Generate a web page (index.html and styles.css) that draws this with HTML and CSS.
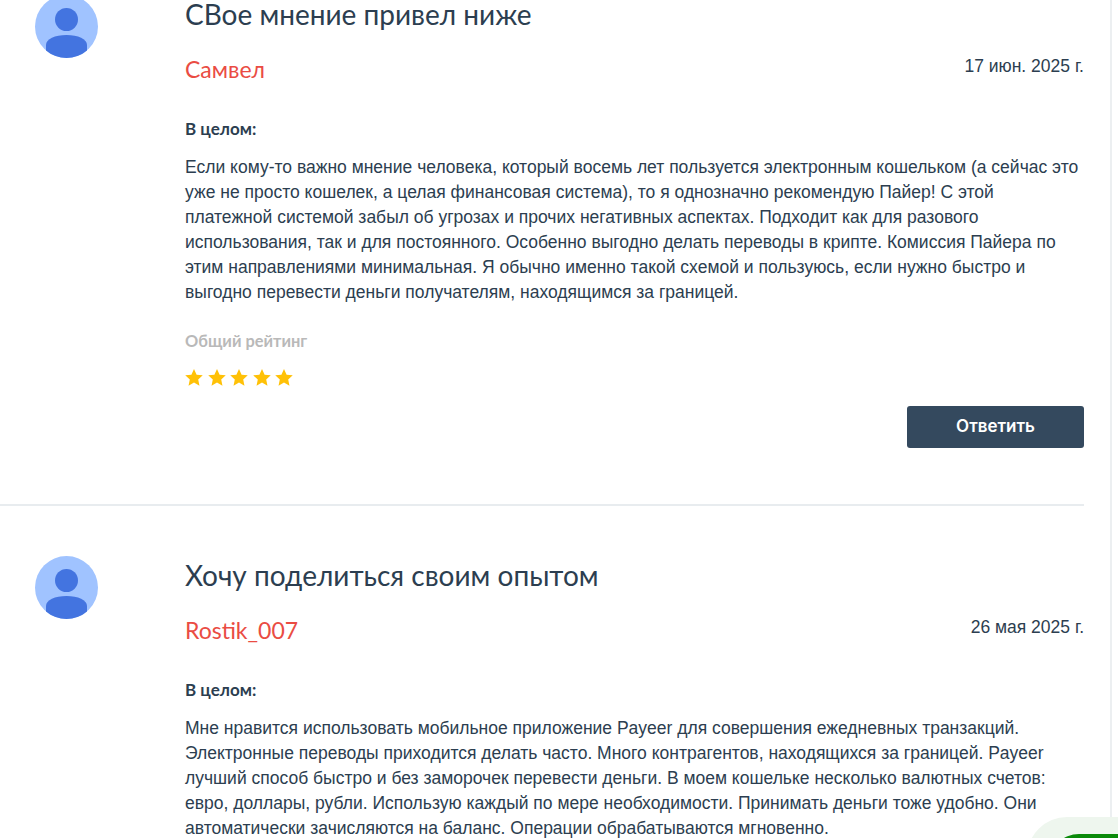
FILE: index.html
```html
<!DOCTYPE html>
<html lang="ru">
<head>
  <meta charset="UTF-8">
  <meta name="viewport" content="width=device-width, initial-scale=1.0">
  <title>Отзывы</title>
  <link rel="stylesheet" href="styles.css">
</head>
<body>
  <div class="page">
    <div class="review">
      <div class="avatar">
        <svg viewBox="0 0 63 63" width="63" height="63"><circle cx="31.500" cy="31.500" r="31.500" fill="#a0c3ff"/><circle cx="31.500" cy="24.500" r="11.500" fill="#4374e0"/><path d="M11 55.400V50c0-6 9-10 20.500-10S52 44 52 50v5.400A31.500 31.500 0 0 1 11 55.400z" fill="#4374e0"/></svg>
      </div>
      <div class="review-body">
        <h3 class="review-title">СВое мнение привел ниже</h3>
        <div class="review-meta">
          <span class="author">Самвел</span>
          <span class="date">17 июн. 2025 г.</span>
        </div>
        <div class="label">В целом:</div>
        <p class="text">Если кому-то важно мнение человека, который восемь лет пользуется электронным кошельком (а сейчас это уже не просто кошелек, а целая финансовая система), то я однозначно рекомендую Пайер! С этой платежной системой забыл об угрозах и прочих негативных аспектах. Подходит как для разового использования, так и для постоянного. Особенно выгодно делать переводы в крипте. Комиссия Пайера по этим направлениями минимальная. Я обычно именно такой схемой и пользуюсь, если нужно быстро и выгодно перевести деньги получателям, находящимся за границей.</p>
        <div class="rating-label">Общий рейтинг</div>
        <div class="stars">
          <svg viewBox="2 2.500 20 19" width="18" height="17"><path d="M12 2.500l2.900 6.300 6.900.8-5.100 4.700 1.400 6.800-6.100-3.400-6.100 3.400 1.400-6.800-5.100-4.700 6.900-.8z"/></svg>
          <svg viewBox="2 2.500 20 19" width="18" height="17"><path d="M12 2.500l2.900 6.300 6.900.8-5.100 4.700 1.400 6.800-6.100-3.400-6.100 3.400 1.400-6.800-5.100-4.700 6.900-.8z"/></svg>
          <svg viewBox="2 2.500 20 19" width="18" height="17"><path d="M12 2.500l2.900 6.300 6.900.8-5.100 4.700 1.400 6.800-6.100-3.400-6.100 3.400 1.400-6.800-5.100-4.700 6.900-.8z"/></svg>
          <svg viewBox="2 2.500 20 19" width="18" height="17"><path d="M12 2.500l2.900 6.300 6.900.8-5.100 4.700 1.400 6.800-6.100-3.400-6.100 3.400 1.400-6.800-5.100-4.700 6.900-.8z"/></svg>
          <svg viewBox="2 2.500 20 19" width="18" height="17"><path d="M12 2.500l2.900 6.300 6.900.8-5.100 4.700 1.400 6.800-6.100-3.400-6.100 3.400 1.400-6.800-5.100-4.700 6.900-.8z"/></svg>
        </div>
        <div class="actions"><button class="reply">Ответить</button></div>
      </div>
    </div>

    <div class="review">
      <div class="avatar">
        <svg viewBox="0 0 63 63" width="63" height="63"><circle cx="31.500" cy="31.500" r="31.500" fill="#a0c3ff"/><circle cx="31.500" cy="24.500" r="11.500" fill="#4374e0"/><path d="M11 55.400V50c0-6 9-10 20.500-10S52 44 52 50v5.400A31.500 31.500 0 0 1 11 55.400z" fill="#4374e0"/></svg>
      </div>
      <div class="review-body">
        <h3 class="review-title">Хочу поделиться своим опытом</h3>
        <div class="review-meta">
          <span class="author">Rostik_007</span>
          <span class="date">26 мая 2025 г.</span>
        </div>
        <div class="label">В целом:</div>
        <p class="text">Мне нравится использовать мобильное приложение Payeer для совершения ежедневных транзакций. Электронные переводы приходится делать часто. Много контрагентов, находящихся за границей. Payeer лучший способ быстро и без заморочек перевести деньги. В моем кошельке несколько валютных счетов: евро, доллары, рубли. Использую каждый по мере необходимости. Принимать деньги тоже удобно. Они автоматически зачисляются на баланс. Операции обрабатываются мгновенно.</p>
      </div>
    </div>
  </div>

  <div class="chat-bubble"><div class="chat-inner"></div></div>
</body>
</html>
```
FILE: styles.css
```css
html, body {
  margin: 0;
  padding: 0;
  height: 100%;
  overflow: hidden;
}
body {
  font-family: "Liberation Sans", Arial, sans-serif;
  font-size: 17.500px;
  color: #2c3e50;
  background: #fff;
  position: relative;
}
.page {
  width: 1110px;
  height: 100%;
  border-right: 2px solid #eceff1;
  overflow: hidden;
}
.review {
  display: flex;
  width: 1084px;
  padding: 0 0 56px 35px;
  box-sizing: border-box;
  border-bottom: 2px solid #e8ecef;
  margin-top: 50px;
}
.review:first-child {
  margin-top: -5px;
}
.review:last-child {
  border-bottom: none;
}
.avatar {
  width: 150px;
  flex-shrink: 0;
}
.review-title {
  font-family: Lato, "Open Sans", sans-serif;
  font-size: 28px;
  font-weight: 400;
  line-height: 28px;
  margin: 5px 0 0;
}
.review-body {
  flex: 1;
}
.review-meta {
  display: flex;
  justify-content: space-between;
  align-items: flex-start;
  margin-top: 27px;
}
.author {
  font-family: Lato, "Open Sans", sans-serif;
  font-size: 23px;
  line-height: 28px;
  color: #ea4c43;
}
.date {
  line-height: 20px;
  padding-top: 1px;
}
.label {
  font-family: Lato, "Open Sans", sans-serif;
  font-size: 17px;
  font-weight: 700;
  line-height: 20px;
  margin-top: 36px;
}
.text {
  line-height: 25px;
  margin: 16px 0 0;
}
.rating-label {
  font-family: Lato, "Open Sans", sans-serif;
  font-size: 16.400px;
  font-weight: 700;
  line-height: 20px;
  color: #b9b9b9;
  margin-top: 26px;
}
.stars {
  display: flex;
  gap: 4.500px;
  margin-top: 18px;
}
.stars svg {
  fill: #ffc107;
  display: block;
}
.actions {
  display: flex;
  justify-content: flex-end;
  margin-top: 20px;
}
.reply {
  width: 177px;
  height: 42px;
  padding: 0 0 2px;
  background: #34495e;
  color: #fff;
  border: none;
  border-radius: 3px;
  font-family: Inter, sans-serif;
  font-size: 17px;
  font-weight: 600;
}
.chat-bubble {
  position: absolute;
  left: 1027px;
  top: 817px;
  width: 140px;
  height: 80px;
  border-radius: 40px;
  background: #eef6ee;
}
.chat-inner {
  position: absolute;
  left: 22px;
  top: 17px;
  width: 100px;
  height: 60px;
  border-radius: 30px;
  background: #0a8a0a;
}
```
